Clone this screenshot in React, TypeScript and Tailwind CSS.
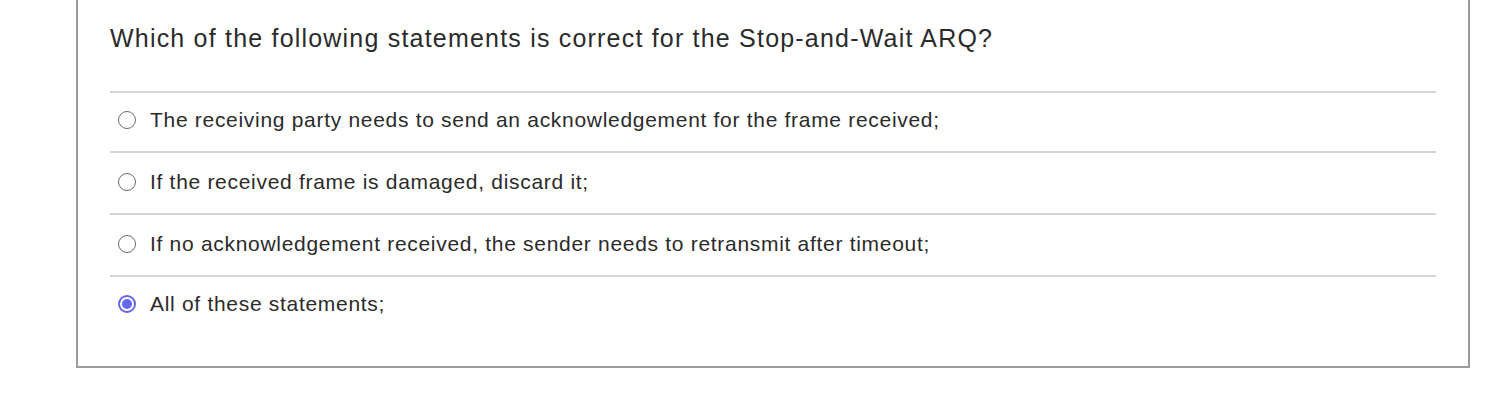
import React from "react";

const options = [
  "The receiving party needs to send an acknowledgement for the frame received;",
  "If the received frame is damaged, discard it;",
  "If no acknowledgement received, the sender needs to retransmit after timeout;",
  "All of these statements;",
];

const rowPad = ["pt-[15px] pb-[19px]", "pt-[17px] pb-[19px]", "pt-[17px] pb-[19px]", "pt-[15px] pb-[21px]"];

function Radio({ checked }: { checked: boolean }) {
  if (checked) {
    return (
      <span className="flex h-[18px] w-[18px] shrink-0 items-center justify-center rounded-full border-2 border-[#6466ee] bg-white">
        <span className="h-[10px] w-[10px] rounded-full bg-[#6466ee]" />
      </span>
    );
  }
  return (
    <span className="block h-[18px] w-[18px] shrink-0 rounded-full border border-[#6b6b6b] bg-white" />
  );
}

export default function App() {
  return (
    <div
      className="min-h-[406px] w-[1512px] bg-white"
      style={{ fontFamily: '"Liberation Sans", Arial, sans-serif' }}
    >
      <div className="ml-[76px] w-[1394px] border-x-2 border-b-2 border-[#9a9a9a] px-[32px] pt-[24px] pb-[29px]">
        <h1 className="text-[25px] leading-[28px] tracking-[1.2px] text-[#2b2b2b]">
          Which of the following statements is correct for the Stop-and-Wait ARQ?
        </h1>
        <div className="mt-[39px]">
          {options.map((o, i) => (
            <div key={i} className={`border-t-2 border-[#d4d4d4] pl-[8px] ${rowPad[i]}`}>
              <label className="flex items-center gap-[14px] text-[21px] leading-[24px] tracking-[0.7px] text-[#2b2b2b]">
                <Radio checked={i === 3} />
                <span>{o}</span>
              </label>
            </div>
          ))}
        </div>
      </div>
    </div>
  );
}
